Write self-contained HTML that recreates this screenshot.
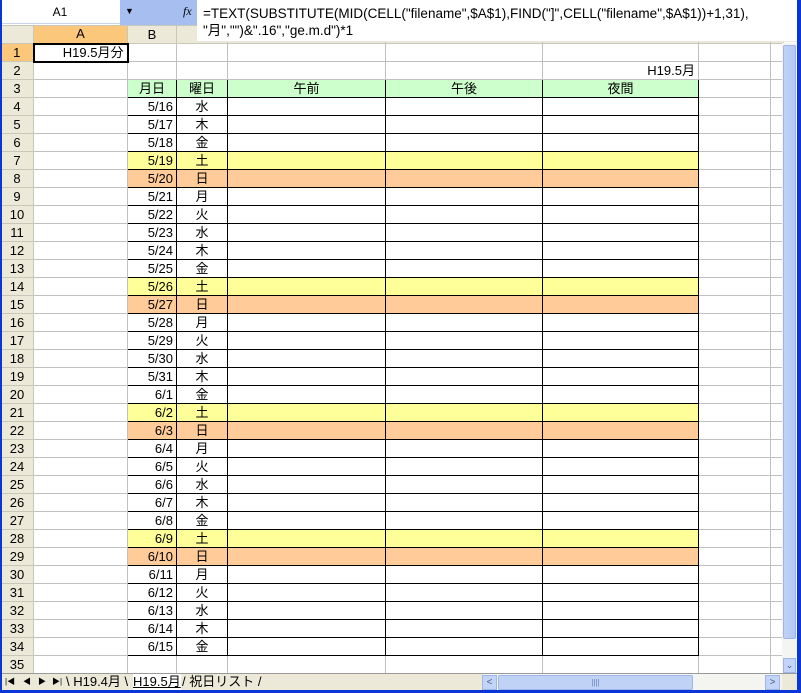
<!DOCTYPE html>
<html><head><meta charset="utf-8"><style>
*{margin:0;padding:0;box-sizing:border-box}
body{width:801px;height:693px;overflow:hidden;background:#fff;position:relative;font-family:"Liberation Sans","Noto Sans CJK JP",sans-serif;font-size:13px;color:#000}
.abs{position:absolute}
#nb{left:0;top:0;width:120px;height:24px;background:#fff;border-bottom:1px solid #c8d4ec;text-align:center;line-height:24px;font-size:12px}
#nbb{left:120px;top:0;width:77px;height:25px;background:#a6bff0}
#fx{left:197px;top:0;width:600px;height:42px;background:#fff;font-size:13.5px;line-height:17px;padding:5px 0 0 6px;white-space:nowrap;border-bottom:1px solid #e8e8e0}
table{position:absolute;left:0;top:25px;border-collapse:collapse;table-layout:fixed}
td{height:18px;border:1px solid #c0c0c0;padding:0 3px;white-space:nowrap;overflow:hidden;font-size:13px;line-height:16px}
td.h{background:#ece9d8;border-color:#c9c7ba;text-align:center;padding:0;font-size:13px}
tr.ch td{height:18px;background:#ece9d8;border-color:#c9c7ba;text-align:center}
td.sel{background:#fbc77a!important}
td.t{border:1px solid #000}
td.r{text-align:right}
td.c{text-align:center}
tr.g td.t{background:#ccffcc}
tr.y td.t{background:#ffff99}
tr.o td.t{background:#ffcc99}
#vs{left:782px;top:43px;width:15px;height:630px;background:#f4f4f0}
#vth{left:783px;top:45px;width:13px;height:594px;background:linear-gradient(90deg,#c0d2f6,#b4c8f4);border:1px solid #9fb5e6;border-radius:2px}
#vdn{left:783px;top:658px;width:13px;height:15px;background:#c2d4f8;border:1px solid #9fb5e6;font-size:9px;text-align:center;color:#4d6185;line-height:13px}
#tabs{left:0;top:673px;width:797px;height:17px;background:#ece9d8;border-top:1px solid #999;font-size:13px;line-height:16px}
#hs{left:482px;top:674px;width:300px;height:16px;background:#f4f4f0}
#hth{left:498px;top:675px;width:195px;height:15px;background:#c0d2f6;border:1px solid #9fb5e6;border-radius:2px;text-align:center;font-size:8px;color:#6780b8;line-height:13px}
.btn{top:675px;width:15px;height:15px;background:#c2d4f8;border:1px solid #9fb5e6;font-size:10px;text-align:center;color:#4d6185;line-height:13px}
.ar{position:absolute;top:0;font-size:8px;color:#000}
#bl{left:0;top:0;width:2px;height:693px;background:#0a36d8}
#br{left:797px;top:0;width:4px;height:693px;background:#0a36d8}
#bb{left:0;top:690px;width:801px;height:3px;background:#0a36d8}
</style></head><body>
<table>
<colgroup><col style="width:33px"><col style="width:94px"><col style="width:49px"><col style="width:51px"><col style="width:158px"><col style="width:157px"><col style="width:156px"><col style="width:72px"><col style="width:13px"></colgroup>
<tr class="ch"><td></td><td class="sel">A</td><td>B</td><td>C</td><td></td><td></td><td></td><td></td><td></td></tr>
<tr><td class="h sel">1</td><td class="r" style="border:2px solid #000">H19.5月分</td><td></td><td></td><td></td><td></td><td></td><td></td><td></td></tr>
<tr><td class="h">2</td><td></td><td></td><td></td><td></td><td></td><td class="r">H19.5月</td><td></td><td></td></tr>
<tr class="g"><td class="h">3</td><td></td><td class="t c">月日</td><td class="t c">曜日</td><td class="t c">午前</td><td class="t c">午後</td><td class="t c">夜間</td><td></td><td></td></tr>
<tr><td class="h">4</td><td></td><td class="t r">5/16</td><td class="t c">水</td><td class="t"></td><td class="t"></td><td class="t"></td><td></td><td></td></tr>
<tr><td class="h">5</td><td></td><td class="t r">5/17</td><td class="t c">木</td><td class="t"></td><td class="t"></td><td class="t"></td><td></td><td></td></tr>
<tr><td class="h">6</td><td></td><td class="t r">5/18</td><td class="t c">金</td><td class="t"></td><td class="t"></td><td class="t"></td><td></td><td></td></tr>
<tr class="y"><td class="h">7</td><td></td><td class="t r">5/19</td><td class="t c">土</td><td class="t"></td><td class="t"></td><td class="t"></td><td></td><td></td></tr>
<tr class="o"><td class="h">8</td><td></td><td class="t r">5/20</td><td class="t c">日</td><td class="t"></td><td class="t"></td><td class="t"></td><td></td><td></td></tr>
<tr><td class="h">9</td><td></td><td class="t r">5/21</td><td class="t c">月</td><td class="t"></td><td class="t"></td><td class="t"></td><td></td><td></td></tr>
<tr><td class="h">10</td><td></td><td class="t r">5/22</td><td class="t c">火</td><td class="t"></td><td class="t"></td><td class="t"></td><td></td><td></td></tr>
<tr><td class="h">11</td><td></td><td class="t r">5/23</td><td class="t c">水</td><td class="t"></td><td class="t"></td><td class="t"></td><td></td><td></td></tr>
<tr><td class="h">12</td><td></td><td class="t r">5/24</td><td class="t c">木</td><td class="t"></td><td class="t"></td><td class="t"></td><td></td><td></td></tr>
<tr><td class="h">13</td><td></td><td class="t r">5/25</td><td class="t c">金</td><td class="t"></td><td class="t"></td><td class="t"></td><td></td><td></td></tr>
<tr class="y"><td class="h">14</td><td></td><td class="t r">5/26</td><td class="t c">土</td><td class="t"></td><td class="t"></td><td class="t"></td><td></td><td></td></tr>
<tr class="o"><td class="h">15</td><td></td><td class="t r">5/27</td><td class="t c">日</td><td class="t"></td><td class="t"></td><td class="t"></td><td></td><td></td></tr>
<tr><td class="h">16</td><td></td><td class="t r">5/28</td><td class="t c">月</td><td class="t"></td><td class="t"></td><td class="t"></td><td></td><td></td></tr>
<tr><td class="h">17</td><td></td><td class="t r">5/29</td><td class="t c">火</td><td class="t"></td><td class="t"></td><td class="t"></td><td></td><td></td></tr>
<tr><td class="h">18</td><td></td><td class="t r">5/30</td><td class="t c">水</td><td class="t"></td><td class="t"></td><td class="t"></td><td></td><td></td></tr>
<tr><td class="h">19</td><td></td><td class="t r">5/31</td><td class="t c">木</td><td class="t"></td><td class="t"></td><td class="t"></td><td></td><td></td></tr>
<tr><td class="h">20</td><td></td><td class="t r">6/1</td><td class="t c">金</td><td class="t"></td><td class="t"></td><td class="t"></td><td></td><td></td></tr>
<tr class="y"><td class="h">21</td><td></td><td class="t r">6/2</td><td class="t c">土</td><td class="t"></td><td class="t"></td><td class="t"></td><td></td><td></td></tr>
<tr class="o"><td class="h">22</td><td></td><td class="t r">6/3</td><td class="t c">日</td><td class="t"></td><td class="t"></td><td class="t"></td><td></td><td></td></tr>
<tr><td class="h">23</td><td></td><td class="t r">6/4</td><td class="t c">月</td><td class="t"></td><td class="t"></td><td class="t"></td><td></td><td></td></tr>
<tr><td class="h">24</td><td></td><td class="t r">6/5</td><td class="t c">火</td><td class="t"></td><td class="t"></td><td class="t"></td><td></td><td></td></tr>
<tr><td class="h">25</td><td></td><td class="t r">6/6</td><td class="t c">水</td><td class="t"></td><td class="t"></td><td class="t"></td><td></td><td></td></tr>
<tr><td class="h">26</td><td></td><td class="t r">6/7</td><td class="t c">木</td><td class="t"></td><td class="t"></td><td class="t"></td><td></td><td></td></tr>
<tr><td class="h">27</td><td></td><td class="t r">6/8</td><td class="t c">金</td><td class="t"></td><td class="t"></td><td class="t"></td><td></td><td></td></tr>
<tr class="y"><td class="h">28</td><td></td><td class="t r">6/9</td><td class="t c">土</td><td class="t"></td><td class="t"></td><td class="t"></td><td></td><td></td></tr>
<tr class="o"><td class="h">29</td><td></td><td class="t r">6/10</td><td class="t c">日</td><td class="t"></td><td class="t"></td><td class="t"></td><td></td><td></td></tr>
<tr><td class="h">30</td><td></td><td class="t r">6/11</td><td class="t c">月</td><td class="t"></td><td class="t"></td><td class="t"></td><td></td><td></td></tr>
<tr><td class="h">31</td><td></td><td class="t r">6/12</td><td class="t c">火</td><td class="t"></td><td class="t"></td><td class="t"></td><td></td><td></td></tr>
<tr><td class="h">32</td><td></td><td class="t r">6/13</td><td class="t c">水</td><td class="t"></td><td class="t"></td><td class="t"></td><td></td><td></td></tr>
<tr><td class="h">33</td><td></td><td class="t r">6/14</td><td class="t c">木</td><td class="t"></td><td class="t"></td><td class="t"></td><td></td><td></td></tr>
<tr><td class="h">34</td><td></td><td class="t r">6/15</td><td class="t c">金</td><td class="t"></td><td class="t"></td><td class="t"></td><td></td><td></td></tr>
<tr><td class="h">35</td><td></td><td></td><td></td><td></td><td></td><td></td><td></td><td></td></tr>
</table>
<div class="abs" id="nb">A1</div>
<div class="abs" id="nbb"><span style="position:absolute;left:5px;top:6px;font-size:9px">▼</span><span style="position:absolute;left:63px;top:4px;font-style:italic;font-size:12px;font-family:'Liberation Serif',serif">fx</span></div>
<div class="abs" id="fx">=TEXT(SUBSTITUTE(MID(CELL("filename",$A$1),FIND("]",CELL("filename",$A$1))+1,31),<br>"月","")&amp;".16","ge.m.d")*1</div>
<div class="abs" id="vs"></div>
<div class="abs" id="vth"></div>
<div class="abs" id="vdn">⌄</div>
<div class="abs" id="tabs"><span class="ar" style="left:5px">|◀</span><span class="ar" style="left:23px">◀</span><span class="ar" style="left:38px">▶</span><span class="ar" style="left:52px">▶|</span><span style="position:absolute;left:66px;top:0">\ H19.4月 \</span><span style="position:absolute;left:133px;top:0;text-decoration:underline;background:#fff">H19.5月</span><span style="position:absolute;left:182px;top:0">/ 祝日リスト /</span></div>
<div class="abs" id="hs"></div>
<div class="abs btn" style="left:482px">&lt;</div>
<div class="abs" id="hth">||||</div>
<div class="abs btn" style="left:765px">&gt;</div>
<div class="abs" id="bl"></div><div class="abs" id="br"></div><div class="abs" id="bb"></div>
</body></html>
